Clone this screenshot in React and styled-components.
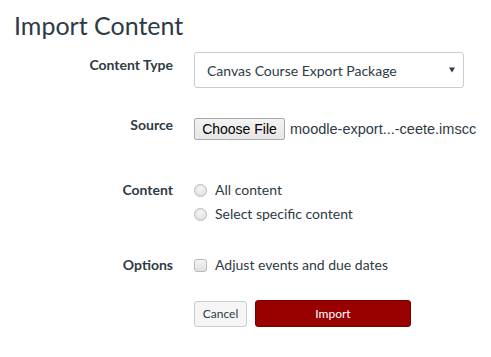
import React from "react";
import styled, { createGlobalStyle } from "styled-components";

const Global = createGlobalStyle`
  html, body { margin: 0; padding: 0; background: #fff; }
  body { font-family: Lato, "Open Sans", sans-serif; color: #2d3b45; }
`;

const Page = styled.div`
  padding: 0 13px;
`;

const Title = styled.h1`
  margin: 9px 0 0;
  padding-left: 1px;
  font-size: 25px;
  line-height: 32px;
  font-weight: 400;
  color: #2d3b45;
`;

const Row = styled.div`
  display: grid;
  grid-template-columns: 160px auto;
  column-gap: 21px;
  align-items: start;
  margin-top: ${(p) => p.$mt}px;
`;

const Label = styled.div`
  text-align: right;
  font-size: 14px;
  line-height: 20px;
  font-weight: 700;
  padding-top: ${(p) => p.$pt || 0}px;
`;

const Select = styled.div`
  box-sizing: border-box;
  width: 270px;
  height: 36px;
  border: 1px solid #c7cdd1;
  border-radius: 3px;
  display: flex;
  align-items: center;
  justify-content: space-between;
  padding: 0 8px 0 12px;
  font-size: 14px;
  color: #2d3b45;
`;

const FileLine = styled.div`
  display: flex;
  align-items: center;
  margin-top: 3px;
  font-family: "Liberation Sans", Arial, sans-serif;
  font-size: 14px;
`;

const FileButton = styled.button`
  box-sizing: border-box;
  height: 22px;
  width: 91px;
  padding: 0;
  border: 1px solid #a9a9a9;
  border-radius: 2px;
  background: linear-gradient(#f3f3f3, #e6e6e6);
  font-family: "Liberation Sans", Arial, sans-serif;
  font-size: 14px;
  color: #000;
`;

const FileName = styled.span`
  margin-left: 5px;
  font-size: 14.5px;
  color: #2d3b45;
`;

const Options = styled.div`
  display: flex;
  flex-direction: column;
  gap: 4px;
`;

const Option = styled.label`
  display: flex;
  align-items: center;
  gap: 8px;
  font-size: 14px;
  line-height: 20px;
  color: #2d3b45;
`;

const Radio = styled.span`
  box-sizing: border-box;
  width: 13px;
  height: 13px;
  border-radius: 50%;
  border: 1px solid #b9b9b9;
  background: radial-gradient(circle at 50% 35%, #f4f4f4, #dcdcdc);
`;

const Check = styled.span`
  box-sizing: border-box;
  width: 13px;
  height: 13px;
  border-radius: 3px;
  border: 1px solid #b9b9b9;
  background: linear-gradient(#f4f4f4, #e0e0e0);
`;

const Buttons = styled.div`
  display: flex;
  align-items: center;
  gap: 8px;
`;

const Btn = styled.button`
  box-sizing: border-box;
  height: ${(p) => (p.$primary ? 27 : 26)}px;
  width: ${(p) => p.$w}px;
  border-radius: 3px;
  border: 1px solid ${(p) => (p.$primary ? "#7a0000" : "#c7cdd1")};
  background: ${(p) => (p.$primary ? "#990000" : "#f5f5f5")};
  color: ${(p) => (p.$primary ? "#fff" : "#2d3b45")};
  font-family: Lato, sans-serif;
  font-size: 12px;
  padding: 0;
`;

const Arrow = () => (
  <svg width="6" height="6" viewBox="0 0 6 6">
    <path d="M0 0.5h6L3 5.5z" fill="#2d3b45" />
  </svg>
);

export default function App() {
  return (
    <Page>
      <Global />
      <Title>Import Content</Title>
      <Row $mt={11}>
        <Label $pt={3}>Content Type</Label>
        <Select>
          <span>Canvas Course Export Package</span>
          <Arrow />
        </Select>
      </Row>
      <Row $mt={27}>
        <Label>Source</Label>
        <FileLine>
          <FileButton>Choose File</FileButton>
          <FileName>moodle-export...-ceete.imscc</FileName>
        </FileLine>
      </Row>
      <Row $mt={40}>
        <Label>Content</Label>
        <Options>
          <Option><Radio />All content</Option>
          <Option><Radio />Select specific content</Option>
        </Options>
      </Row>
      <Row $mt={31}>
        <Label>Options</Label>
        <Options>
          <Option><Check />Adjust events and due dates</Option>
        </Options>
      </Row>
      <Row $mt={25}>
        <span />
        <Buttons>
          <Btn $w={53}>Cancel</Btn>
          <Btn $primary $w={156}>Import</Btn>
        </Buttons>
      </Row>
    </Page>
  );
}
